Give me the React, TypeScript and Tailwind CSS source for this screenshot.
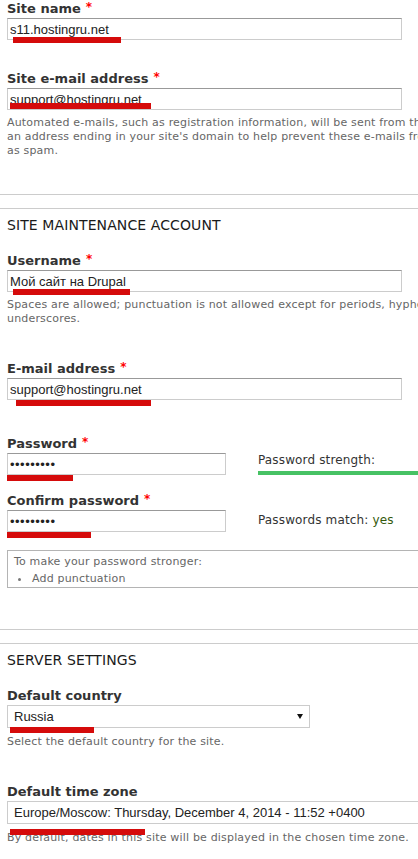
import React from "react";

const labelCls =
  "block h-[17px] leading-[17px] text-[13px] font-bold text-[#333] font-['DejaVu_Sans',sans-serif] whitespace-nowrap";
const inputCls =
  "block h-[22px] border border-[#ccc] border-t-[#999] bg-white px-[2px] text-[13px] text-[#222] font-['Liberation_Sans',Arial,sans-serif] outline-none";
const descCls =
  "text-[11px] leading-[14px] tracking-[0.18px] text-[#666] font-['DejaVu_Sans',sans-serif] whitespace-nowrap";
const legendCls =
  "h-[17px] leading-[17px] text-[14px] uppercase tracking-[0.1px] text-[#1a1a1a] font-['DejaVu_Sans',sans-serif] whitespace-nowrap";

function Label({ text, required = true }: { text: string; required?: boolean }) {
  return (
    <label className={labelCls}>
      {text}
      {required && <span className="relative top-[-2px] ml-[5px] text-[12px] text-[#f00]">*</span>}
    </label>
  );
}

function Select({ value, width }: { value: string; width: string }) {
  return (
    <div
      className={`mt-[1px] flex h-[23px] items-center justify-between border border-[#ccc] bg-white pl-[6px] pr-[6px] ${width}`}
    >
      <span className="text-[13px] text-[#222] font-['Liberation_Sans',Arial,sans-serif] whitespace-nowrap">
        {value}
      </span>
      <svg width="6" height="5" viewBox="0 0 6 5" className="shrink-0">
        <polygon points="0,0 6,0 3,5" fill="#111" />
      </svg>
    </div>
  );
}

// red marker strokes drawn over the screenshot
const marks: { x: number; y: number; w: number }[] = [
  { x: 13, y: 37, w: 108 },
  { x: 10, y: 103, w: 141 },
  { x: 13, y: 289, w: 117 },
  { x: 16, y: 400, w: 135 },
  { x: 7, y: 475, w: 66 },
  { x: 7, y: 532, w: 84 },
  { x: 10, y: 727, w: 84 },
  { x: 10, y: 829, w: 135 },
];

export default function App() {
  return (
    <div className="relative h-[859px] w-[418px] overflow-hidden bg-white">
      <div className="w-[560px]">
        {/* site information */}
        <div className="border-b border-[#ccc] pb-[36px] pl-[7px]">
          <Label text="Site name" />
          <input readOnly value="s11.hostingru.net" className={`${inputCls} mt-[1px] w-[395px]`} />

          <div className="mt-[30px]">
            <Label text="Site e-mail address" />
            <input readOnly value="support@hostingru.net" className={`${inputCls} mt-[1px] w-[395px]`} />
            <div className={`${descCls} mt-[6px]`}>
              Automated e-mails, such as registration information, will be sent from this address. Use
              <br />
              an address ending in your site's domain to help prevent these e-mails from being flagged
              <br />
              as spam.
            </div>
          </div>
        </div>

        {/* maintenance account */}
        <div className="mt-[13px] border-y border-[#ccc] pb-[41px] pl-[7px] pt-[8px]">
          <div className={legendCls}>Site maintenance account</div>

          <div className="mt-[18px]">
            <Label text="Username" />
            <input readOnly value="Мой сайт на Drupal" className={`${inputCls} mt-[1px] w-[395px]`} />
            <div className={`${descCls} mt-[6px]`}>
              Spaces are allowed; punctuation is not allowed except for periods, hyphens, apostrophes, and
              <br />
              underscores.
            </div>
          </div>

          <div className="mt-[34px]">
            <Label text="E-mail address" />
            <input readOnly value="support@hostingru.net" className={`${inputCls} mt-[1px] w-[395px]`} />
          </div>

          <div className="mt-[35px]">
            <Label text="Password" />
            <div className="mt-[1px] flex items-start">
              <input
                readOnly
                type="password"
                value="123456789"
                className={`${inputCls} w-[219px] tracking-[0.5px]`}
              />
              <div className="ml-[32px] w-[300px]">
                <div className="text-[12px] leading-[15px] tracking-[0.15px] text-[#333] font-['DejaVu_Sans',sans-serif]">
                  Password strength:
                </div>
                <div className="mt-[3px] h-[4px] w-full bg-[#47c264]" />
              </div>
            </div>
          </div>

          <div className="mt-[17px]">
            <Label text="Confirm password" />
            <div className="mt-[1px] flex items-start">
              <input
                readOnly
                type="password"
                value="123456789"
                className={`${inputCls} w-[219px] tracking-[0.5px]`}
              />
              <div className="ml-[32px] mt-[3px] text-[12px] leading-[15px] tracking-[0.15px] text-[#333] font-['DejaVu_Sans',sans-serif] whitespace-nowrap">
                Passwords match: <span className="text-[#34590d]">yes</span>
              </div>
            </div>
          </div>

          <div className="mt-[18px] w-[500px] border border-[#b4b4b4] pb-[1px] pl-[6px] pt-[4px] text-[11px] leading-[14px] tracking-[0.18px] text-[#666] font-['DejaVu_Sans',sans-serif]">
            <div>To make your password stronger:</div>
            <ul className="mt-[3px]">
              <li className="flex items-center">
                <span className="ml-[4px] h-[3px] w-[3px] rounded-full bg-[#777]" />
                <span className="ml-[11px]">Add punctuation</span>
              </li>
            </ul>
          </div>
        </div>

        {/* server settings */}
        <div className="mt-[13px] border-t border-[#ccc] pl-[7px] pt-[8px]">
          <div className={legendCls}>Server settings</div>

          <div className="mt-[18px]">
            <Label text="Default country" required={false} />
            <Select value="Russia" width="w-[303px]" />
            <div className={`${descCls} mt-[7px]`}>Select the default country for the site.</div>
          </div>

          <div className="mt-[34px]">
            <Label text="Default time zone" required={false} />
            <Select value="Europe/Moscow: Thursday, December 4, 2014 - 11:52 +0400" width="w-[500px]" />
            <div className={`${descCls} mt-[7px]`}>
              By default, dates in this site will be displayed in the chosen time zone.
            </div>
          </div>
        </div>
      </div>

      {marks.map((m, i) => (
        <div
          key={i}
          className="absolute h-[6px] bg-[#d50b0b]"
          style={{ left: m.x, top: m.y, width: m.w }}
        />
      ))}
    </div>
  );
}
